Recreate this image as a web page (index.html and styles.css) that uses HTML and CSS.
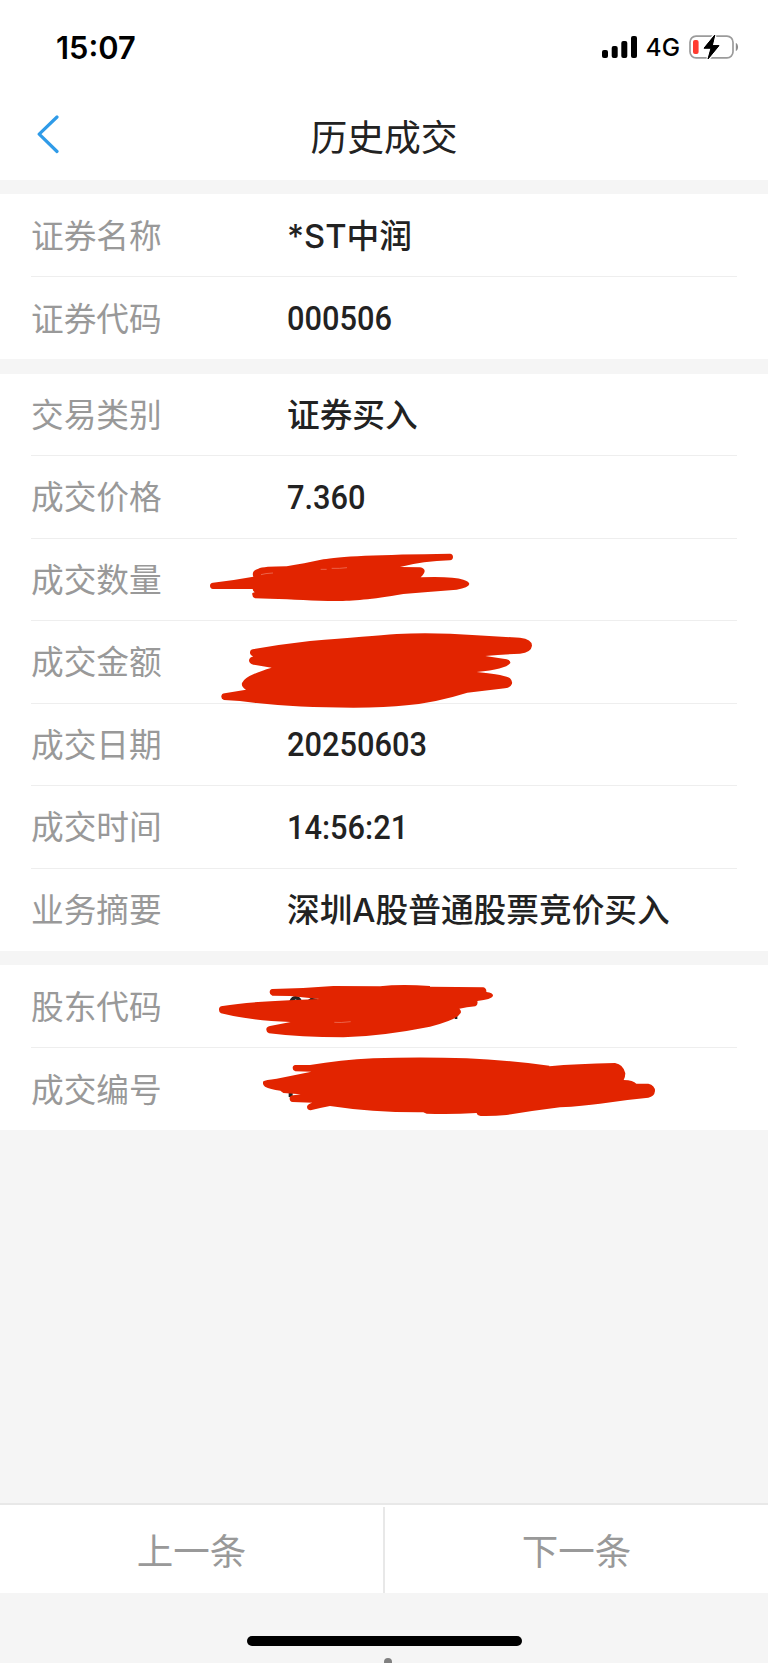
FILE: index.html
```
<!doctype html>
<html lang="zh-cn">
<head>
    <meta charset="UTF-8">
    <meta name="viewport" content="width=device-width, initial-scale=1.0">
    <title>历史成交</title>
    <link rel="stylesheet" href="styles.css">
</head>
<body>
    <div class="page">
        <div class="status">
            <span class="time">15:07</span>
            <div class="status_right">
                <svg class="signal" width="36" height="22" viewBox="0 0 36 22">
                    <rect x="0" y="14" width="6" height="8" rx="2"/>
                    <rect x="9.7" y="10" width="6" height="12" rx="2"/>
                    <rect x="19.3" y="5" width="6" height="17" rx="2"/>
                    <rect x="29" y="0" width="6" height="22" rx="2"/>
                </svg>
                <span class="net">4G</span>
                <svg class="battery" width="50" height="26" viewBox="0 0 50 26">
                    <rect x="1" y="2.2" width="43" height="21.6" rx="6" fill="none" stroke="#9b9b9b" stroke-width="1.7"/>
                    <path d="M46.8 9v8c3-1 3-7 0-8z" fill="#8c8c8c"/>
                    <rect x="4" y="6" width="5.6" height="14" rx="2" fill="#ff3b30"/>
                    <path d="M25.8 1L15 14.2h7L19 25 30 11.6h-6.7z" fill="#000" stroke="#fff" stroke-width="3.4" paint-order="stroke"/>
                    <path d="M25.8 1L15 14.2h7L19 25 30 11.6h-6.7z" fill="#000" stroke="#000" stroke-width="1" stroke-linejoin="round"/>
                </svg>
            </div>
        </div>
        <div class="header">
            <svg class="back" width="24" height="40" viewBox="0 0 24 40">
                <path d="M21 2L3.2 19.2 21 36.5" fill="none" stroke="#2f9be8" stroke-width="3.2" stroke-linecap="round" stroke-linejoin="round"/>
            </svg>
            <h1>历史成交</h1>
        </div>

        <ul class="list">
            <li><span class="label">证券名称</span><span class="value">*ST中润</span></li>
            <li><span class="label">证券代码</span><span class="value num">000506</span></li>
        </ul>

        <ul class="list">
            <li><span class="label">交易类别</span><span class="value">证券买入</span></li>
            <li><span class="label">成交价格</span><span class="value num">7.360</span></li>
            <li>
                <span class="label">成交数量</span>
                <svg class="mark mark_amount" width="360" height="80" viewBox="0 0 1080 240">
                    <path d="M69 143Q130 136 190 125Q183 108 205 101Q220 94 290 94Q340 86 400 73Q460 60 780 56Q789 57 789 66Q789 75 780 76Q700 78 630 96L690 97Q704 100 704 108Q704 115 692 127Q790 124 820 134Q838 140 838 147Q836 158 800 164Q720 170 640 177C540 194 490 198 440 198C370 198 310 192 240 191L195 190Q185 186 187 174L194 172Q188 168 188 162L69 162Q60 160 60 152Q60 144 69 143Z"/>
                    <path class="scratch" d="M213 119Q225 115 249 114M392 103H410M425 100Q450 101 471 98"/>
                </svg>
            </li>
            <li>
                <span class="label">成交金额</span>
                <svg class="mark mark_money" width="360" height="100" viewBox="0 240 1080 300">
                    <path d="M188 343Q270 328 360 318Q540 303 620 297Q730 291 860 301L990 308Q1026 312 1026 332Q1024 352 990 356Q940 358 886 363L950 373Q962 376 961 384Q950 402 860 411Q950 420 960 430Q968 438 966 446Q962 458 945 460L832 473Q740 502 650 511Q590 518 490 518Q320 518 200 504Q150 497 102 495Q93 492 94 484Q95 475 104 475L168 464Q153 455 156 444Q164 422 245 398L190 389Q177 386 177 376Q178 367 190 364Q179 360 180 351Q181 344 188 343Z"/>
                </svg>
            </li>
            <li><span class="label">成交日期</span><span class="value num">20250603</span></li>
            <li><span class="label">成交时间</span><span class="value num">14:56:21</span></li>
            <li><span class="label">业务摘要</span><span class="value">深圳A股普通股票竞价买入</span></li>
        </ul>

        <ul class="list">
            <li>
                <span class="label">股东代码</span>
                <svg class="mark mark_holder" width="300" height="110" viewBox="0 0 900 330">
                    <path class="ink" d="M268 183Q274 168 287 168Q300 168 306 183H294Q287 174 280 183ZM324 180L333 173L352 176V184ZM764 228h8v9h-8z"/>
                    <path d="M217 147Q310 145 400 138L540 139Q600 132 690 138V140L850 142Q860 145 859 156Q880 158 879 168Q875 178 832 183Q835 195 826 199Q800 202 778 206Q785 212 782 219Q770 240 690 260Q550 288 430 292Q300 292 207 280Q198 276 199 268Q199 260 210 258L272 246Q140 240 63 220Q56 215 57 207Q58 198 68 198Q140 186 268 181L358 177L270 168L217 167Q209 165 209 157Q209 148 217 147Z"/>
                    <path class="scratch" d="M403 247Q420 249 452 245"/>
                </svg>
            </li>
            <li>
                <span class="label">成交编号</span>
                <svg class="mark mark_no" width="430" height="80" viewBox="0 0 1290 240">
                    <path class="ink" d="M146 158h12v13h-12z"/>
                    <path d="M166 75L210 75Q300 60 400 55Q540 50 680 55Q800 60 928 77V79Q1010 71 1125 69Q1150 73 1156 100Q1156 110 1151 120Q1180 121 1189 131L1225 131Q1245 136 1245 153Q1243 170 1225 173Q1150 180 1080 191Q1030 198 960 202Q880 212 800 225Q760 229 722 228Q711 226 710 219Q630 224 560 221L550 217Q400 218 270 198Q240 203 212 211Q201 210 201 200Q202 192 217 188L158 186Q149 184 149 176Q148 167 160 166L182 163L130 159L121 152Q90 147 75 140Q66 134 70 124Q75 120 110 116L214 95L166 94Q158 92 158 84Q158 76 166 75Z"/>
                </svg>
            </li>
        </ul>

        <div class="footer">
            <div class="pager">
                <a class="pager_btn">上一条</a>
                <a class="pager_btn">下一条</a>
            </div>
            <div class="home">
                <div class="home_bar"></div>
                <div class="home_dot"></div>
            </div>
        </div>
    </div>
</body>
</html>
```
FILE: styles.css
```
*{
    padding:0;
    margin:0;
    box-sizing: border-box;
}
ul{
    list-style: none;
}
body{
    background: #f5f5f5;
    font-family: "Noto Sans CJK SC", sans-serif;
    color: #222;
}
.page{
    width: 768px;
    height: 1663px;
    display: flex;
    flex-direction: column;
    overflow: hidden;
}
.status{
    height: 94px;
    flex: none;
    display: flex;
    justify-content: space-between;
    padding: 0 29px 0 56px;
    background: #fff;
    color: #000;
    font-family: Inter, sans-serif;
}
.time{
    font-size: 30.8px;
    font-weight: 600;
    line-height: 95px;
}
.status_right{
    display: flex;
    align-items: center;
}
.signal{
    margin-right: 8px;
}
.net{
    font-size: 24.5px;
    font-weight: 500;
    line-height: 97px;
    margin-right: 9px;
}
.header{
    height: 86px;
    flex: none;
    display: flex;
    align-items: center;
    background: #fff;
    padding: 0 36px;
}
.back{
    margin-top: -5px;
}
.header h1{
    flex: 1;
    font-size: 36.8px;
    font-weight: 400;
    line-height: 82px;
    text-align: center;
    padding: 0 24px 4px 0;
}

/* 列表 */
.list{
    flex: none;
    margin-top: 14.3px;
    background: #fff;
}
.list li{
    position: relative;
    display: flex;
    align-items: center;
    height: 82.5px;
    margin: 0 31px;
}
.list li:not(:last-child){
    border-bottom: 1px solid #eee;
}
.label{
    width: 256px;
    padding-bottom: 4px;
    font-size: 32.7px;
    color: #999;
}
.value{
    padding-bottom: 4px;
    font-family: Inter, "Noto Sans CJK SC", sans-serif;
    font-size: 32.7px;
    font-weight: 500;
}
.num{
    padding-bottom: 0;
    font-family: Roboto, sans-serif;
    font-size: 34px;
    transform: scaleX(.905);
    transform-origin: left;
}

/* 涂抹 */
.mark{
    position: absolute;
    z-index: 1;
    fill: #e22400;
}
.mark .ink{
    fill: #222;
}
.mark .scratch{
    fill: none;
    stroke: #f0826c;
    stroke-width: 2;
}
.mark_amount{
    left: 159px;
    top: -4px;
}
.mark_money{
    left: 159px;
    top: -6px;
}
.mark_holder{
    left: 169px;
    top: -25px;
}
.mark_no{
    left: 209px;
    top: -8px;
}

/* 底部 */
.footer{
    margin-top: auto;
    flex: none;
}
.pager{
    display: flex;
    height: 90px;
    padding-top: 2px;
    background: #fff;
    border-top: 2px solid #e8e8e8;
}
.pager_btn{
    flex: 1;
    line-height: 85px;
    font-size: 36.5px;
    color: #999;
    text-align: center;
}
.pager_btn + .pager_btn{
    border-left: 2px solid #e8e8e8;
}
.home{
    height: 70px;
    padding-top: 43px;
}
.home_bar{
    width: 275px;
    height: 10px;
    margin: 0 auto;
    border-radius: 5px;
    background: #000;
}
.home_dot{
    width: 8px;
    height: 8px;
    margin: 12px 0 0 384px;
    border-radius: 4px;
    background: #808080;
}
```
